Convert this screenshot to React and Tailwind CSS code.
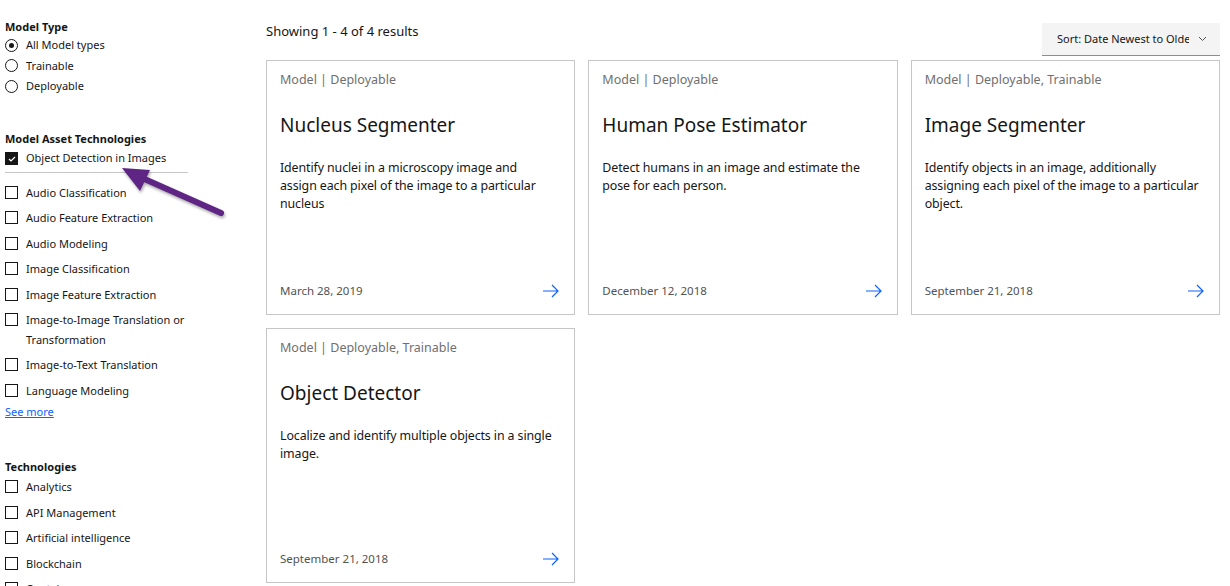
import React from "react";

const font = { fontFamily: '"Noto Sans", "Open Sans", sans-serif' };

const assetTech = [
  "Audio Classification",
  "Audio Feature Extraction",
  "Audio Modeling",
  "Image Classification",
  "Image Feature Extraction",
  "Image-to-Image Translation or Transformation",
  "Image-to-Text Translation",
  "Language Modeling",
];

const technologies = [
  "Analytics",
  "API Management",
  "Artificial intelligence",
  "Blockchain",
  "Containers",
];

const cards = [
  {
    tag: "Model | Deployable",
    title: "Nucleus Segmenter",
    desc: "Identify nuclei in a microscopy image and assign each pixel of the image to a particular nucleus",
    date: "March 28, 2019",
  },
  {
    tag: "Model | Deployable",
    title: "Human Pose Estimator",
    desc: "Detect humans in an image and estimate the pose for each person.",
    date: "December 12, 2018",
  },
  {
    tag: "Model | Deployable, Trainable",
    title: "Image Segmenter",
    desc: "Identify objects in an image, additionally assigning each pixel of the image to a particular object.",
    date: "September 21, 2018",
  },
  {
    tag: "Model | Deployable, Trainable",
    title: "Object Detector",
    desc: "Localize and identify multiple objects in a single image.",
    date: "September 21, 2018",
  },
];

const Radio = ({ label, checked }) => (
  <div className="flex items-center gap-[8px] h-[20.5px]">
    <span className="w-[13px] h-[13px] rounded-full border border-[#161616] flex items-center justify-center shrink-0">
      {checked && <span className="w-[5px] h-[5px] rounded-full bg-[#161616]" />}
    </span>
    <span className="text-[11px] text-[#161616]">{label}</span>
  </div>
);

const Checkbox = ({ label }) => (
  <div className="flex items-start gap-[8px] py-[3px] leading-[19.5px]">
    <span className="mt-[3px] w-[13px] h-[13px] border border-[#161616] bg-white shrink-0" />
    <span className="text-[11px] text-[#161616] w-[160px]">{label}</span>
  </div>
);

const Card = ({ tag, title, desc, date }) => (
  <div className="h-[255px] border border-[#c6c6c6] bg-white px-[13px] pt-[11px] pb-[15px] flex flex-col">
    <p className="text-[12.5px] leading-[16px] text-[#6f6f6f]">{tag}</p>
    <h3 className="mt-[25px] text-[19px] leading-[24px] text-[#161616]">{title}</h3>
    <p className="mt-[22px] pr-[6px] text-[12.4px] leading-[18px] tracking-[-0.1px] text-[#161616]">{desc}</p>
    <div className="mt-auto flex items-center justify-between">
      <span className="text-[11.5px] leading-[16px] text-[#525252]">{date}</span>
      <svg width="18" height="14" viewBox="0 0 18 14" fill="none" className="mr-[1px]">
        <path d="M1 7h15M10 1l6 6-6 6" stroke="#0f62fe" strokeWidth="1.2" />
      </svg>
    </div>
  </div>
);

export default function App() {
  return (
    <div className="relative w-[1230px] h-[586px] overflow-hidden bg-white flex" style={font}>
      <aside className="w-[266px] shrink-0 pl-[5px] pt-[20px]">
        <h4 className="text-[11px] font-bold leading-[14px] text-[#161616]">Model Type</h4>
        <div className="mt-[1px]">
          <Radio label="All Model types" checked />
          <Radio label="Trainable" />
          <Radio label="Deployable" />
        </div>

        <h4 className="mt-[35px] text-[11px] font-bold leading-[14px] text-[#161616]">
          Model Asset Technologies
        </h4>
        <div className="mt-[3px] w-[183px] border-b border-[#c6c6c6] pb-[3px]">
          <div className="flex items-center gap-[8px] h-[20px]">
            <span className="w-[13px] h-[13px] bg-[#161616] flex items-center justify-center shrink-0">
              <svg width="8" height="6" viewBox="0 0 8 6" fill="none">
                <path d="M1 3l2 2 4-4" stroke="#fff" strokeWidth="1.2" />
              </svg>
            </span>
            <span className="text-[11px] text-[#161616]">Object Detection in Images</span>
          </div>
        </div>
        <div className="mt-[7px]">
          {assetTech.map((t) => (
            <Checkbox key={t} label={t} />
          ))}
        </div>
        <a href="#" className="block mt-[1px] text-[11px] leading-[16px] text-[#0f62fe] underline">
          See more
        </a>

        <h4 className="mt-[40px] text-[11px] font-bold leading-[14px] text-[#161616]">Technologies</h4>
        <div>
          {technologies.map((t) => (
            <Checkbox key={t} label={t} />
          ))}
        </div>
      </aside>

      <main className="w-[954px] shrink-0">
        <div className="mt-[23px] mb-[4px] flex items-start justify-between">
          <p className="text-[13px] leading-[16px] text-[#161616]">Showing 1 - 4 of 4 results</p>
          <div className="w-[178px] h-[33px] bg-[#f4f4f4] border-b border-[#8d8d8d] flex items-center pl-[15px] pr-[13px]">
            <span className="text-[11px] text-[#161616] whitespace-nowrap overflow-hidden w-[132px]">
              Sort: Date Newest to Oldest
            </span>
            <svg width="9" height="6" viewBox="0 0 9 6" fill="none" className="ml-auto">
              <path d="M1 1l3.5 3.5L8 1" stroke="#525252" strokeWidth="1" />
            </svg>
          </div>
        </div>
        <div className="grid grid-cols-3 gap-[13px]">
          {cards.map((c) => (
            <Card key={c.title} {...c} />
          ))}
        </div>
      </main>

      <svg
        className="absolute left-0 top-0 pointer-events-none"
        width="1230"
        height="586"
        style={{ filter: "drop-shadow(1px 2px 1.5px rgba(0,0,0,0.35))" }}
      >
        <line x1="221" y1="213" x2="140" y2="177" stroke="#5e2584" strokeWidth="6" strokeLinecap="round" />
        <polygon points="122,168 150,170 140,191" fill="#5e2584" />
      </svg>
    </div>
  );
}
